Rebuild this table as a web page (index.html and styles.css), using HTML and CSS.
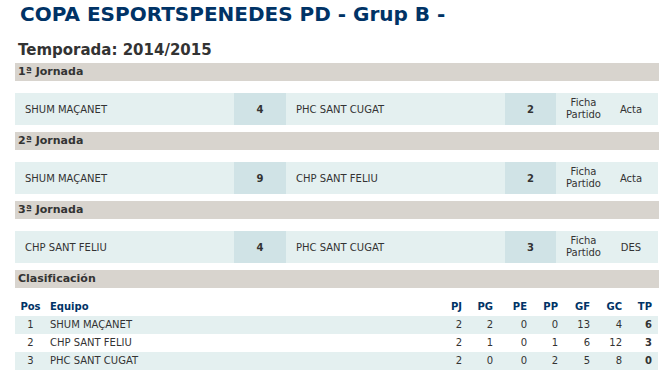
FILE: index.html
```html
<!DOCTYPE html>
<html lang="ca">
<head>
<meta charset="utf-8">
<title>COPA ESPORTSPENEDES PD - Grup B -</title>
<link rel="stylesheet" href="styles.css">
</head>
<body>
<div class="page">
  <h1 class="title">COPA ESPORTSPENEDES PD - Grup B -</h1>
  <h2 class="season">Temporada: 2014/2015</h2>

  <section class="round">
    <div class="round-head">1ª Jornada</div>
    <div class="match">
      <div class="team">SHUM MAÇANET</div>
      <div class="score">4</div>
      <div class="team">PHC SANT CUGAT</div>
      <div class="score">2</div>
      <div class="link">Ficha<br>Partido</div>
      <div class="acta">Acta</div>
    </div>
  </section>

  <section class="round">
    <div class="round-head">2ª Jornada</div>
    <div class="match">
      <div class="team">SHUM MAÇANET</div>
      <div class="score">9</div>
      <div class="team">CHP SANT FELIU</div>
      <div class="score">2</div>
      <div class="link">Ficha<br>Partido</div>
      <div class="acta">Acta</div>
    </div>
  </section>

  <section class="round">
    <div class="round-head">3ª Jornada</div>
    <div class="match">
      <div class="team">CHP SANT FELIU</div>
      <div class="score">4</div>
      <div class="team">PHC SANT CUGAT</div>
      <div class="score">3</div>
      <div class="link">Ficha<br>Partido</div>
      <div class="acta">DES</div>
    </div>
  </section>

  <section class="round standings">
    <div class="round-head">Clasificación</div>
    <div class="st-row st-head">
      <div class="pos">Pos</div><div class="eq">Equipo</div>
      <div class="num">PJ</div><div class="num">PG</div><div class="num">PE</div><div class="num">PP</div>
      <div class="num">GF</div><div class="num">GC</div><div class="num">TP</div>
    </div>
    <div class="st-row odd">
      <div class="pos">1</div><div class="eq">SHUM MAÇANET</div>
      <div class="num">2</div><div class="num">2</div><div class="num">0</div><div class="num">0</div>
      <div class="num">13</div><div class="num">4</div><div class="num tp">6</div>
    </div>
    <div class="st-row">
      <div class="pos">2</div><div class="eq">CHP SANT FELIU</div>
      <div class="num">2</div><div class="num">1</div><div class="num">0</div><div class="num">1</div>
      <div class="num">6</div><div class="num">12</div><div class="num tp">3</div>
    </div>
    <div class="st-row odd">
      <div class="pos">3</div><div class="eq">PHC SANT CUGAT</div>
      <div class="num">2</div><div class="num">0</div><div class="num">0</div><div class="num">2</div>
      <div class="num">5</div><div class="num">8</div><div class="num tp">0</div>
    </div>
  </section>
</div>
</body>
</html>
```

FILE: styles.css
```css
html, body {
  margin: 0;
  padding: 0;
  background: #ffffff;
}

body {
  font-family: "DejaVu Sans", Verdana, sans-serif;
  font-size: 10px;
  color: #333333;
}

.page {
  padding: 0 7px 0 15px;
}

.title {
  margin: 2px 0 0 0;
  padding-left: 5px;
  font-size: 20px;
  line-height: 24px;
  font-weight: bold;
  color: #003366;
}

.season {
  margin: 15px 0 0 0;
  padding-left: 3px;
  font-size: 15px;
  line-height: 18px;
  font-weight: bold;
  color: #333333;
}

.round {
  margin-top: 7px;
}

.season + .round {
  margin-top: 4px;
}

.round-head {
  height: 18px;
  line-height: 18px;
  padding-left: 3px;
  background: #d8d4ce;
  font-size: 11px;
  font-weight: bold;
  color: #333333;
}

.match {
  margin: 12px 1px 0 0;
  height: 32px;
  display: grid;
  grid-template-columns: 219px 52px 219px 51px 55px 47px;
  background: #e4f0f0;
  align-items: stretch;
}

.match > div {
  display: flex;
  align-items: center;
}

.team {
  padding-left: 10px;
}

.score {
  justify-content: center;
  background: #d0e3e6;
  font-weight: bold;
}

.link {
  justify-content: center;
  text-align: center;
  line-height: 12px;
}

.acta {
  justify-content: center;
  padding-right: 7px;
}

.standings .round-head {
  margin-bottom: 10px;
}

.st-row {
  display: grid;
  grid-template-columns: 31px 1fr 31px 31px 34px 31px 32px 32px 30px;
  height: 18px;
  line-height: 18px;
  margin-right: 1px;
}

.st-row.odd {
  background: #e4f0f0;
}

.st-head {
  font-weight: bold;
  color: #003366;
}

.pos {
  text-align: center;
}

.eq {
  padding-left: 4px;
}

.num {
  text-align: right;
  padding-right: 6px;
}

.st-head .num:last-child {
  padding-right: 6px;
}

.tp {
  font-weight: bold;
}
```
